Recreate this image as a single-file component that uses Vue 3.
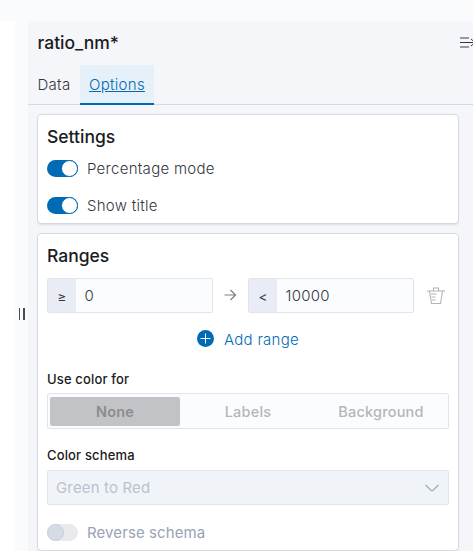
<script setup>
import { ref } from 'vue'

const tabs = ['Data', 'Options']
const activeTab = ref('Options')
const settings = ref([
  { label: 'Percentage mode', on: true },
  { label: 'Show title', on: true },
])
const range = ref({ from: '0', to: '10000' })
const colorTargets = ['None', 'Labels', 'Background']
const colorTarget = ref('None')
</script>

<template>
  <div class="page">
    <div class="canvas"></div>
    <div class="resizer"><i></i><i></i></div>
    <aside class="sidebar">
      <header class="head">
        <h2 class="index">ratio_nm*</h2>
        <svg class="collapse" width="16" height="16" viewBox="0 0 16 16">
          <path d="M0 3h9v2H0zM0 12h9v2H0z" fill="#9999a3" />
          <path d="M0 8.500h15M11 5l4 3.500-4 3.500" fill="none" stroke="#343741" />
        </svg>
      </header>
      <nav class="tabs">
        <button v-for="t in tabs" :key="t" class="tab" :class="{ active: t === activeTab }" @click="activeTab = t"><span>{{ t }}</span></button>
      </nav>

      <section class="panel settings">
        <h3>Settings</h3>
        <div v-for="s in settings" :key="s.label" class="switch-row" @click="s.on = !s.on">
          <span class="switch" :class="{ on: s.on }"><i></i></span>
          <span class="label">{{ s.label }}</span>
        </div>
      </section>

      <section class="panel ranges">
        <h3>Ranges</h3>
        <div class="range">
          <div class="field"><span class="prefix">≥</span><span class="value">{{ range.from }}</span></div>
          <svg class="arrow" width="13" height="13" viewBox="0 0 13 13">
            <path d="M.5 6h11M6.500 1L11.500 6l-5 5" fill="none" stroke="#7b7e87" stroke-width="1.2" />
          </svg>
          <div class="field"><span class="prefix">&lt;</span><span class="value">{{ range.to }}</span></div>
          <svg class="trash" width="18" height="18" viewBox="0 0 18 18">
            <path d="M0 4h18M6.500 3.500V1h5v2.500M2.500 4.500l2 12h9l2-12M4 7h5.500M4.500 10h4M5 13h3.500" fill="none" stroke="#b4b4b6" stroke-width="1.1" />
          </svg>
        </div>
        <button class="add">
          <svg width="17" height="17" viewBox="0 0 17 17">
            <circle cx="8.5" cy="8.5" r="8.5" fill="#006bb4" />
            <path d="M8.500 3.500v10M3.500 8.500h10" stroke="#fff" />
          </svg>
          <span>Add range</span>
        </button>
        <h4>Use color for</h4>
        <div class="group">
          <button v-for="c in colorTargets" :key="c" class="option" :class="{ selected: c === colorTarget }" disabled>{{ c }}</button>
        </div>
        <h4 class="schema-label">Color schema</h4>
        <div class="select">
          <span>Green to Red</span>
          <svg width="14" height="8" viewBox="0 0 14 8">
            <path d="M.5 1l5.600 5.300q.9.8 1.800 0L13.500 1" fill="none" stroke="#98a2b3" stroke-width="1.1" />
          </svg>
        </div>
        <div class="switch-row disabled">
          <span class="switch"><i></i></span>
          <span class="label">Reverse schema</span>
        </div>
      </section>
    </aside>
  </div>
</template>

<style>
body {
  overflow: hidden;
}
</style>

<style scoped>
* {
  box-sizing: border-box;
}
.page {
  display: flex;
  height: 551px;
  padding-top: 21px;
  overflow: hidden;
  background: #fafbfd;
  color: #343741;
  font: 300 15px/20px Inter, "Liberation Sans", sans-serif;
  letter-spacing: 0.28px;
}
button {
  border: 0;
  padding: 0;
  background: none;
  font: inherit;
  letter-spacing: inherit;
  color: inherit;
}
.canvas {
  width: 15px;
  background: #fff;
}
.resizer {
  display: flex;
  justify-content: center;
  align-items: center;
  gap: 3px;
  width: 13px;
  padding-top: 56px;
}
.resizer i {
  width: 1.5px;
  height: 12px;
  background: #4a4d56;
}
.sidebar {
  flex: 1;
  min-width: 0;
  background: #f5f6fa;
}
.head {
  display: flex;
  justify-content: space-between;
  height: 44px;
  padding: 12px 0 0 9.5px;
}
.index,
h3 {
  margin: 0;
  font-size: 17.5px;
  line-height: 20px;
  font-weight: 500;
  letter-spacing: 0;
  color: #1a1c21;
}
.collapse {
  flex: none;
  margin: 1px -3px 0 0;
}
.tabs {
  display: flex;
  height: 40px;
  border-bottom: 1px solid #d3dae6;
}
.tab {
  width: 52px;
  height: 40px;
}
.tab.active {
  width: 74px;
  background: #e6f0f8;
  color: #006bb4;
  text-decoration: underline;
  box-shadow: inset 0 -2px #006bb4;
}
.panel {
  width: 422px;
  margin-left: 9px;
  padding: 0 9px;
  background: #fff;
  border: 1px solid #d3dae6;
  border-radius: 4px;
  box-shadow: 0 2px 2px -1px rgba(152, 162, 179, 0.3);
}
.settings {
  height: 110px;
  margin-top: 9px;
  padding-top: 12px;
}
.ranges {
  height: 318px;
  margin-top: 9px;
  padding-top: 12px;
}
.switch-row {
  display: flex;
  align-items: center;
  gap: 9px;
  height: 20px;
}
h3 + .switch-row {
  margin-top: 12px;
}
.switch-row + .switch-row {
  margin-top: 17px;
}
.switch {
  display: flex;
  justify-content: flex-start;
  width: 31px;
  height: 17px;
  margin-bottom: 1px;
  border-radius: 9px;
  background: #e9eaee;
}
.switch i {
  width: 17px;
  height: 17px;
  border: 1px solid #c9ced8;
  border-radius: 50%;
  background: #d6dce5;
}
.switch.on {
  justify-content: flex-end;
  background: #006bb4;
}
.switch.on i {
  border-color: #006bb4;
  background: #fff;
}
.range {
  display: flex;
  align-items: center;
  height: 35px;
  margin-top: 12px;
}
.field {
  display: flex;
  width: 166px;
  height: 35px;
  border: 1px solid #e1e4ef;
  border-radius: 2px;
  background: #fbfcfe;
}
.prefix {
  width: 28px;
  padding-top: 8px;
  background: #e9ecf4;
  text-align: center;
  font-size: 13.5px;
  font-weight: 400;
}
.value {
  padding: 7px 8.5px;
}
.arrow {
  margin: 0 11px;
}
.trash {
  margin-left: 13px;
}
.add {
  display: flex;
  align-items: center;
  gap: 10px;
  height: 20px;
  margin: 17px 0 0 150px;
  color: #006bb4;
}
.add svg {
  margin-bottom: 3px;
}
h4 {
  margin: 19px 0 0;
  font-size: 13px;
  line-height: 20px;
  font-weight: 500;
  letter-spacing: 0.15px;
  color: #1a1c21;
}
.group {
  display: flex;
  height: 36px;
  margin-top: 4px;
  padding: 3px 2px 2px;
  border: 1px solid #e1e4ef;
  border-radius: 2px;
  background: #fbfcfe;
}
.option {
  flex: 1;
  height: 29px;
  padding-left: 3px;
  border-radius: 2px;
  font-size: 14.5px;
  font-weight: 500;
  letter-spacing: 0.2px;
  color: #b4b6ba;
}
.option.selected {
  flex: 0 0 130px;
  padding-left: 0;
  background: #c2c3c6;
  color: #8b8c8f;
  font-weight: 600;
}
.schema-label {
  margin-top: 16px;
}
.select {
  display: flex;
  align-items: center;
  justify-content: space-between;
  height: 35px;
  margin-top: 5px;
  padding: 1px 9px 0 8px;
  border: 1px solid #e1e4ef;
  border-radius: 2px;
  background: #f0f4f8;
  color: #bcc1cf;
  font-weight: 400;
  letter-spacing: 0.15px;
}
.disabled {
  margin-top: 18px;
  color: #98a2b3;
  font-weight: 400;
  letter-spacing: 0.1px;
}
</style>
